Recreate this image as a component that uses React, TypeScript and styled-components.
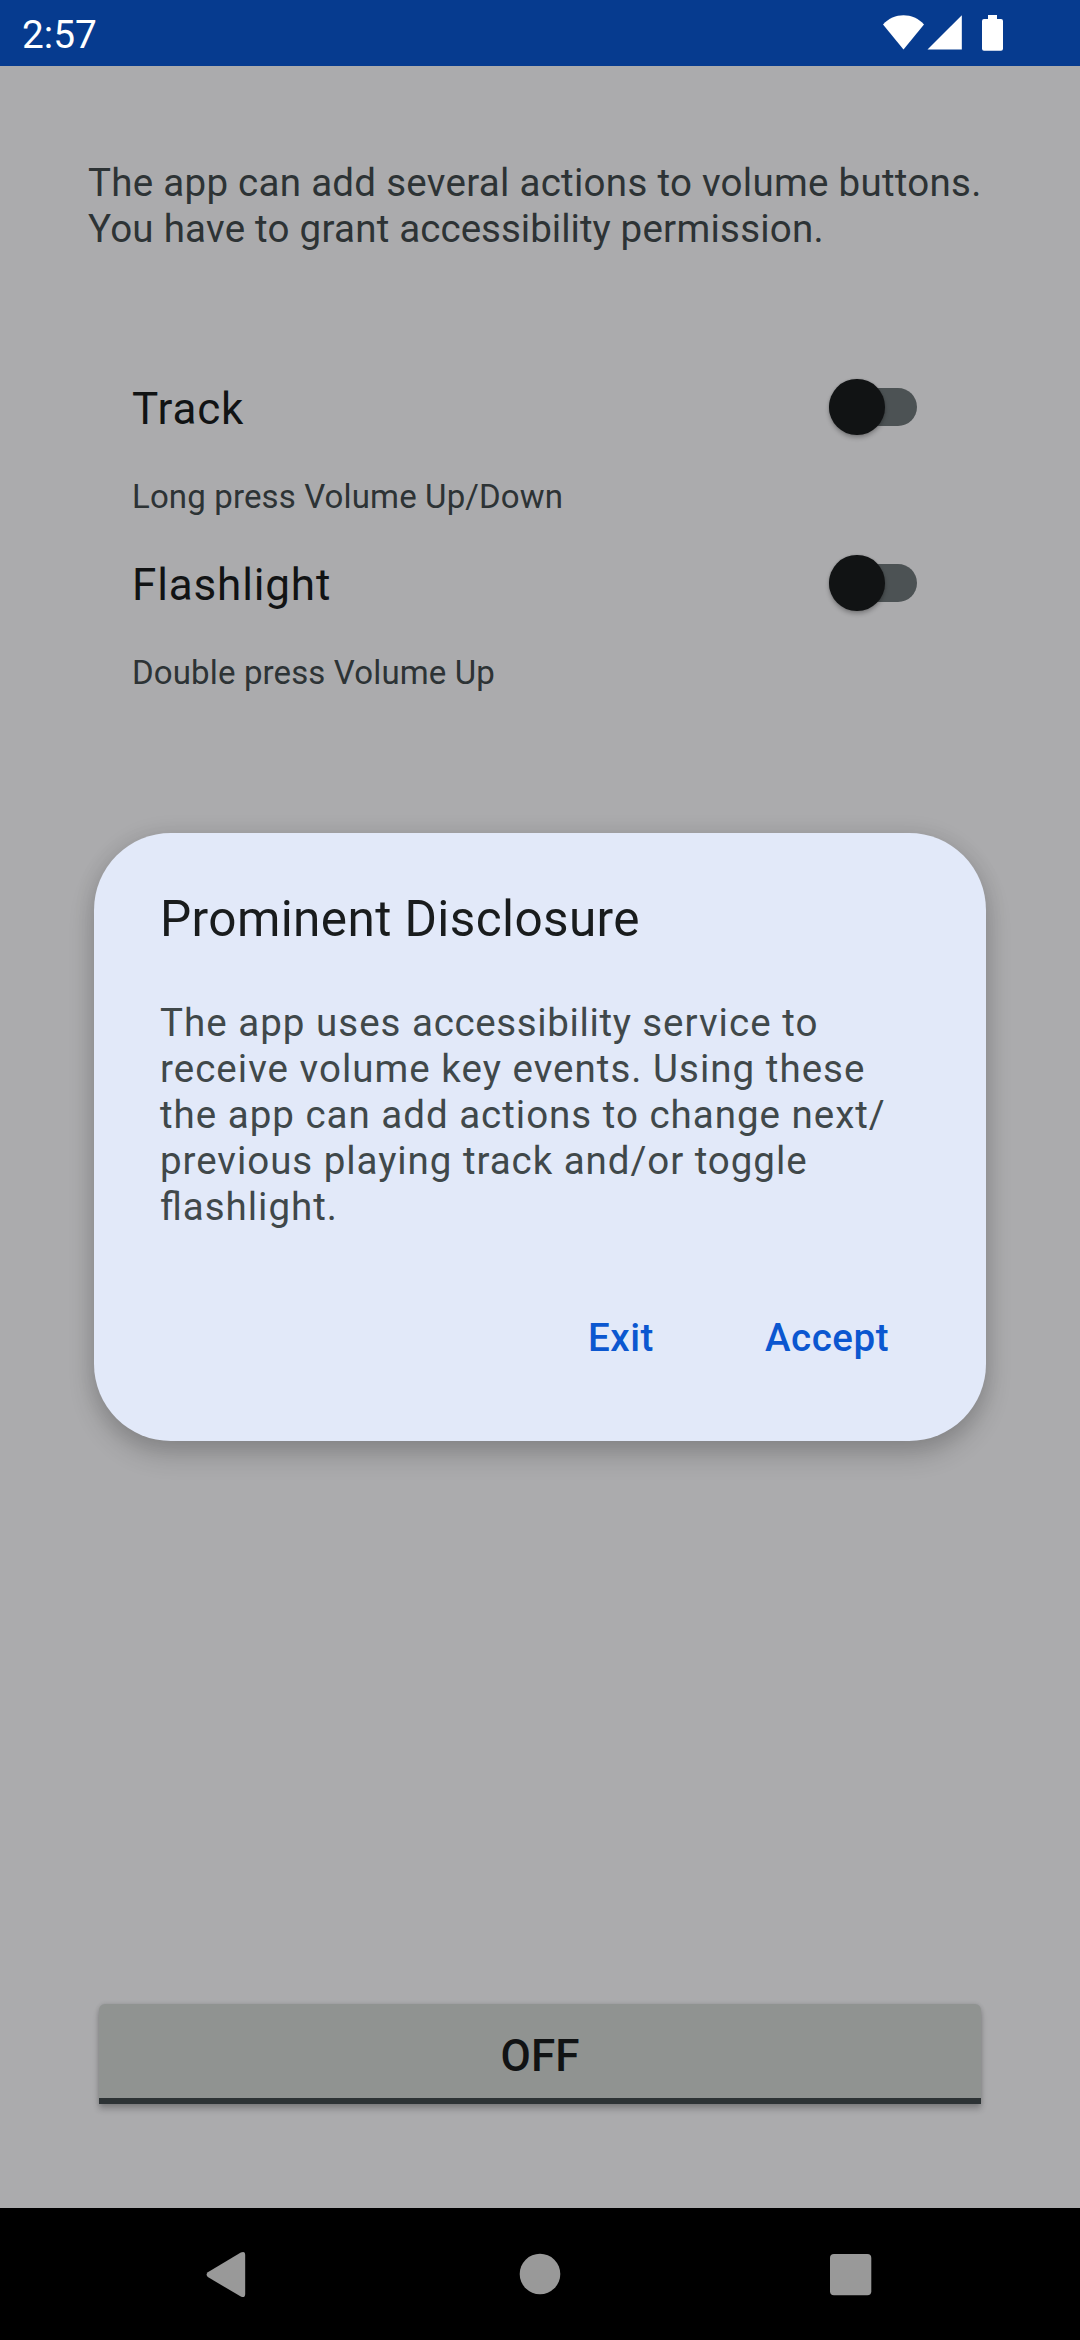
import React from "react";
import styled, { createGlobalStyle } from "styled-components";

const GlobalStyle = createGlobalStyle`
  * { box-sizing: border-box; }
  html, body { margin: 0; padding: 0; }
  body {
    width: 1080px;
    height: 2340px;
    overflow: hidden;
    background: #000;
    font-family: Roboto, "Noto Sans", sans-serif;
  }
`;

const Screen = styled.div`
  width: 1080px;
  height: 2340px;
  display: flex;
  flex-direction: column;
  overflow: hidden;
`;

const StatusBar = styled.header`
  height: 66px;
  flex: none;
  display: flex;
  justify-content: space-between;
  background: #063b8f;
  padding: 0 76px 0 22px;
`;

const Clock = styled.span`
  color: #fff;
  font-size: 38.8px;
  line-height: 70px;
`;

const StatusIcons = styled.svg`
  width: 122px;
  height: 66px;
  fill: #fff;
`;

const Content = styled.main`
  position: relative;
  flex: 1;
  display: flex;
  flex-direction: column;
  padding: 94px 99px 104px;
  background: #ababad;
`;

const Tracked = styled.span<{ $tracking: number }>`
  letter-spacing: ${(p) => p.$tracking}em;
`;

const Line = styled(Tracked)`
  display: block;
`;

const Intro = styled.p`
  margin: 0 -11px;
  color: #2d3335;
  font-size: 38.5px;
  line-height: 46px;
  white-space: nowrap;
`;

const Settings = styled.section`
  display: flex;
  flex-direction: column;
  margin: 102px 59px 0 33px;
`;

const Setting = styled.div`
  height: 176px;
  display: flex;
  flex-direction: column;
`;

const SettingTop = styled.div`
  height: 108px;
  display: flex;
  align-items: center;
  justify-content: space-between;
`;

const SettingTitle = styled.span`
  color: #111314;
  font-size: 44px;
  line-height: 52px;
  padding-top: 2px;
  letter-spacing: 0.0195em;
`;

const SettingHint = styled.span`
  color: #2d3335;
  font-size: 33px;
  line-height: 40px;
  margin-top: 15px;
  letter-spacing: 0.0042em;
`;

const SwitchTrack = styled.button`
  width: 88px;
  height: 38px;
  margin: 0 5px 2px 0;
  padding: 0;
  border: 0;
  border-radius: 19px;
  background: #4c5254;
  display: flex;
  align-items: center;
`;

const SwitchThumb = styled.span`
  width: 55.5px;
  height: 55.5px;
  flex: none;
  border-radius: 50%;
  background: #111314;
  box-shadow: 0 3px 4px rgba(0, 0, 0, 0.25), 0 0 2px rgba(0, 0, 0, 0.2);
`;

const PowerButton = styled.button`
  margin-top: auto;
  height: 100px;
  padding: 10px 0 0;
  border: 0;
  border-bottom: 6px solid #2d3335;
  border-radius: 6px 6px 0 0;
  background: #909391;
  box-shadow: 0 5px 6px rgba(0, 0, 0, 0.24), 0 0 4px rgba(0, 0, 0, 0.12);
  color: #111314;
  font-family: inherit;
  font-size: 44px;
  font-weight: 500;
  line-height: 52px;
  text-align: center;
`;

const Overlay = styled.div`
  position: absolute;
  inset: 0;
  display: grid;
  place-items: center;
`;

const Dialog = styled.div`
  width: 892px;
  height: 608px;
  display: flex;
  flex-direction: column;
  padding: 56px 66px 66px;
  border-radius: 77px;
  background: #e2e9f9;
  box-shadow: 0 14px 26px rgba(0, 0, 0, 0.19), 0 0 22px rgba(0, 0, 0, 0.09);
`;

const DialogTitle = styled.h2`
  margin: 0;
  color: #191c1d;
  font-size: 49.5px;
  font-weight: 400;
  line-height: 60px;
  letter-spacing: 0.0078em;
`;

const DialogText = styled.p`
  margin: 51px 0 0;
  color: #40484a;
  font-size: 38.5px;
  line-height: 46px;
  font-feature-settings: "liga" 1;
  white-space: nowrap;
`;

const DialogActions = styled.div`
  display: flex;
  justify-content: flex-end;
  gap: 111px;
  margin: 84px 31px 0 0;
`;

const DialogButton = styled.button`
  padding: 0;
  border: 0;
  background: none;
  color: #0b57d0;
  font-family: inherit;
  font-size: 38.5px;
  font-weight: 500;
  line-height: 48px;
  letter-spacing: 0.014em;
`;

const NavBar = styled.nav`
  height: 132px;
  flex: none;
  background: #000;
`;

const NavIcons = styled.svg`
  display: block;
  width: 1080px;
  height: 132px;
  fill: #999;
`;

function SettingItem({ title, hint }: { title: string; hint: string }) {
  return (
    <Setting>
      <SettingTop>
        <SettingTitle>{title}</SettingTitle>
        <SwitchTrack role="switch" aria-checked={false} aria-label={title}>
          <SwitchThumb />
        </SwitchTrack>
      </SettingTop>
      <SettingHint>{hint}</SettingHint>
    </Setting>
  );
}

export default function App() {
  return (
    <>
      <GlobalStyle />
      <Screen>
        <StatusBar>
          <Clock>2:57</Clock>
          <StatusIcons viewBox="882 0 122 66">
            <path d="M903.5 49.5 L883 24.5 C894 12.2 913 12.2 924 24.5 Z" />
            <path d="M927.5 49.5 L961.8 15.2 V49.5 Z" />
            <path d="M988 15 H997 V19 H1001 A2 2 0 0 1 1003 21 V48.7 A2 2 0 0 1 1001 50.7 H984 A2 2 0 0 1 982 48.7 V21 A2 2 0 0 1 984 19 H988 Z" />
          </StatusIcons>
        </StatusBar>
        <Content>
          <Intro>
            <Line $tracking={0.0073}>The app can add several actions to volume buttons.</Line>
            <Line $tracking={0.0065}>
              You have to grant <Tracked $tracking={0.0002}>accessibility</Tracked> permission.
            </Line>
          </Intro>
          <Settings>
            <SettingItem title="Track" hint="Long press Volume Up/Down" />
            <SettingItem title="Flashlight" hint="Double press Volume Up" />
          </Settings>
          <PowerButton>OFF</PowerButton>
          <Overlay>
            <Dialog role="dialog">
              <DialogTitle>Prominent Disclosure</DialogTitle>
              <DialogText>
                <Line $tracking={0.0265}>
                  The app uses <Tracked $tracking={0.0165}>accessibility</Tracked> service to
                </Line>
                <Line $tracking={0.0265}>receive volume key events. Using these</Line>
                <Line $tracking={0.0257}>the app can add actions to change next/</Line>
                <Line $tracking={0.0247}>previous playing track and/or toggle</Line>
                <Line $tracking={0.025}>flashlight.</Line>
              </DialogText>
              <DialogActions>
                <DialogButton>Exit</DialogButton>
                <DialogButton>Accept</DialogButton>
              </DialogActions>
            </Dialog>
          </Overlay>
        </Content>
        <NavBar>
          <NavIcons viewBox="0 2208 1080 132">
            <path d="M207.8 2272.2 L240.8 2252.6 Q245.2 2250.8 245.2 2255 V2294 Q245.2 2298.4 240.8 2296.6 L207.8 2277 Q205.4 2274.6 207.8 2272.2 Z" />
            <circle cx="540" cy="2274" r="20.3" />
            <rect x="830" y="2254" width="41.3" height="41.3" rx="4" />
          </NavIcons>
        </NavBar>
      </Screen>
    </>
  );
}
